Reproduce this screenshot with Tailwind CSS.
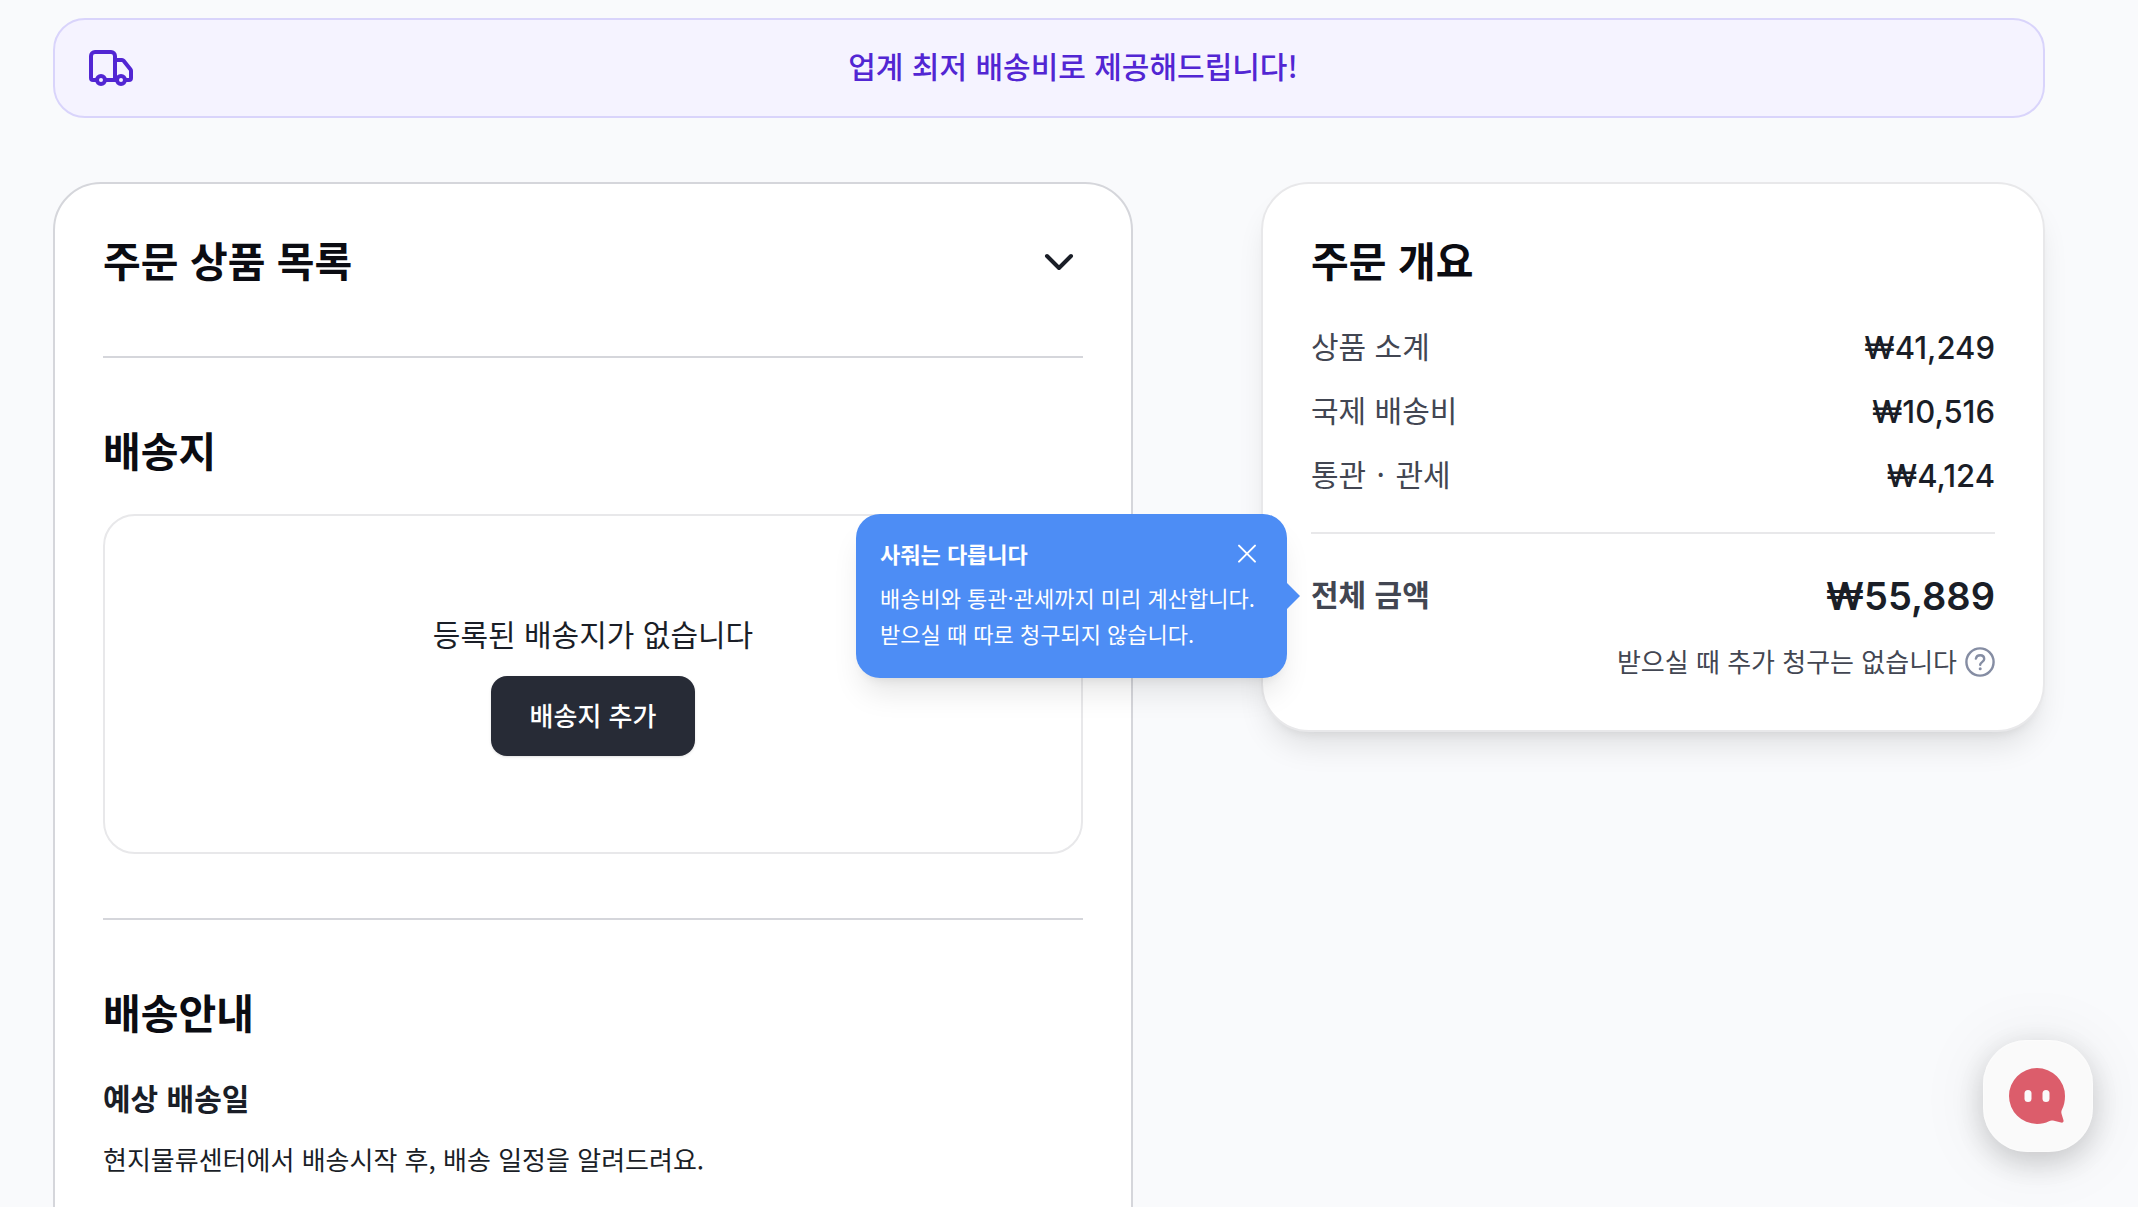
<!DOCTYPE html>
<html lang="ko">
<head>
<meta charset="utf-8">
<meta name="viewport" content="width=device-width, initial-scale=1">
<title>주문하기</title>
<script src="https://cdn.jsdelivr.net/npm/@tailwindcss/browser@4"></script>
</head>
<body class="min-h-screen bg-[#f9fafc] font-['Noto_Sans_CJK_KR',sans-serif] text-[#1a1e27]">
<main class="pt-[18px] pr-[93px] pb-16 pl-[53px]">

  <div class="flex items-center rounded-[32px] border-2 border-[#d9d4fb] bg-[#f5f3ff] px-8 py-6 text-[#5226d3]">
    <svg class="size-12 shrink-0" viewBox="0 0 24 24" fill="none" stroke="currentColor" stroke-width="2" stroke-linecap="round" stroke-linejoin="round" aria-hidden="true">
      <path d="M14 18V6a2 2 0 0 0-2-2H4a2 2 0 0 0-2 2v11a1 1 0 0 0 1 1h2"/>
      <path d="M15 18H9"/>
      <path d="M19 18h2a1 1 0 0 0 1-1v-3.65a1 1 0 0 0-.22-.624l-3.48-4.35A1 1 0 0 0 17.52 8H14"/>
      <circle cx="17" cy="18" r="2"/>
      <circle cx="7" cy="18" r="2"/>
    </svg>
    <p class="flex-1 pb-1.5 text-center text-[30px] leading-[42px] font-medium">업계 최저 배송비로 제공해드립니다!</p>
  </div>

  <div class="mt-16 grid grid-cols-[1080fr_784fr] items-start gap-32">
    <div class="rounded-[48px] border-2 border-[#d5d6db] bg-white px-12 pt-12 pb-24">
      <section>
        <div class="flex items-center justify-between">
          <h2 class="pb-1.5 text-[41px] leading-[54px] font-bold text-[#0b0c12]">주문 상품 목록</h2>
          <button type="button" aria-label="주문 상품 목록 펼치기">
            <svg class="size-12" viewBox="0 0 24 24" fill="none" stroke="currentColor" stroke-width="2" stroke-linecap="round" stroke-linejoin="round" aria-hidden="true"><path d="m6 9 6 6 6-6"/></svg>
          </button>
        </div>
      </section>
      <hr class="my-16 border-t-2 border-[#d5d6db]">
      <section>
        <h2 class="pb-1.5 text-[41px] leading-[54px] font-bold text-[#0b0c12]">배송지</h2>
        <div class="mt-8 flex min-h-[340px] flex-col items-center justify-center gap-4 rounded-[32px] border-2 border-[#e8e8ea]">
          <p class="pb-1.5 text-[30px] leading-[42px]">등록된 배송지가 없습니다</p>
          <button type="button" class="h-20 min-w-[204px] rounded-2xl bg-[#272b36] px-8 pb-0.5 text-[26px] leading-[38px] font-medium text-white shadow-sm">배송지 추가</button>
        </div>
      </section>
      <hr class="my-16 border-t-2 border-[#d5d6db]">
      <section>
        <h2 class="pb-1.5 text-[41px] leading-[54px] font-bold text-[#0b0c12]">배송안내</h2>
        <h3 class="mt-8 pb-1.5 text-[30px] leading-[42px] font-bold">예상 배송일</h3>
        <p class="mt-4 pb-0.5 text-[26px] leading-[38px]">현지물류센터에서 배송시작 후, 배송 일정을 알려드려요.</p>
      </section>
    </div>

    <aside class="rounded-[48px] border-2 border-[#e8e8ea] bg-white p-12 shadow-[0_20px_30px_-6px_rgba(0,0,0,0.1),0_8px_12px_-8px_rgba(0,0,0,0.1)]">
      <h2 class="pb-1.5 text-[41px] leading-[54px] font-bold text-[#0b0c12]">주문 개요</h2>
      <dl class="mt-8 flex flex-col gap-4">
        <div class="flex justify-between"><dt class="pb-1.5 text-[30px] leading-[42px] text-[#424652]">상품 소계</dt><dd class="font-[Inter,sans-serif] text-[31px] leading-[48px] font-medium">₩41,249</dd></div>
        <div class="flex justify-between"><dt class="pb-1.5 text-[30px] leading-[42px] text-[#424652]">국제 배송비</dt><dd class="font-[Inter,sans-serif] text-[31px] leading-[48px] font-medium">₩10,516</dd></div>
        <div class="flex justify-between"><dt class="pb-1.5 text-[30px] leading-[42px] text-[#424652]">통관 <span class="mx-0.5">·</span> 관세</dt><dd class="font-[Inter,sans-serif] text-[31px] leading-[48px] font-medium">₩4,124</dd></div>
      </dl>
      <hr class="my-8 border-t-2 border-[#e8e8ea]">
      <div class="relative flex items-center justify-between">
        <span class="pb-1.5 text-[30px] leading-[42px] font-bold text-[#424652]">전체 금액</span>
        <span class="font-[Inter,sans-serif] text-[38px] leading-[60px] font-semibold">₩55,889</span>

        <div role="tooltip" class="absolute top-1/2 right-full mr-6 min-w-[431px] -translate-y-1/2 rounded-3xl bg-[#4d8df5] px-6 pt-[21px] pb-[27px] text-[22px] leading-9 whitespace-nowrap text-white shadow-[0_20px_30px_-6px_rgba(0,0,0,0.1),0_8px_12px_-8px_rgba(0,0,0,0.1)]">
          <div class="flex items-center justify-between">
            <strong class="font-bold">사줘는 다릅니다</strong>
            <button type="button" aria-label="닫기">
              <svg class="size-8" viewBox="0 0 24 24" fill="none" stroke="currentColor" stroke-width="1.5" stroke-linecap="round" aria-hidden="true"><path d="M18 6.500 6 18.500M6 6.500l12 12"/></svg>
            </button>
          </div>
          <p class="mt-2">배송비와 통관·관세까지 미리 계산합니다.<br>받으실 때 따로 청구되지 않습니다.</p>
          <svg class="absolute top-1/2 left-full h-[26px] w-[13px] -translate-y-1/2" viewBox="0 0 13 26" fill="#4d8df5" aria-hidden="true"><path d="M0 0 13 13 0 26Z"/></svg>
        </div>
      </div>
      <div class="mt-4 flex items-center justify-end gap-2 text-[#424652]">
        <span class="pb-0.5 text-[26px] leading-[38px]">받으실 때 추가 청구는 없습니다</span>
        <button type="button" aria-label="추가 청구 안내" class="text-[#858da3]">
          <svg class="size-[30px]" viewBox="0 0 30 30" fill="none" stroke="currentColor" stroke-width="2.4" stroke-linecap="round" stroke-linejoin="round" aria-hidden="true">
            <circle cx="15" cy="15" r="13.600"/>
            <path d="M10.900 11.600C11.300 9.500 13 8.200 15.200 8.200c2.300 0 4 1.500 4 3.700 0 3-4 3.300-4 5.800"/>
            <circle cx="15.200" cy="21.800" r="1.500" fill="currentColor" stroke="none"/>
          </svg>
        </button>
      </div>
    </aside>
  </div>
</main>

<button type="button" aria-label="채팅 상담" class="fixed right-[45px] bottom-[55px] flex h-28 w-[110px] items-center justify-center rounded-[44px] bg-[#fafafa] pr-0.5 shadow-[0_10px_32px_rgba(0,0,0,0.18),0_4px_70px_rgba(0,0,0,0.08),inset_0_0_3px_#ffffff]">
  <svg class="size-14" viewBox="0 0 56 56" aria-hidden="true">
    <path fill="#dc5d6b" d="M28 0a28 28 0 1 0 0 56c4.500 0 8.500-1 12-2.800 1.300-.7 2.500-.9 4-.6l8 2c1.700.4 2.900-.6 2.500-2.300l-1.900-6.300c-.5-1.700-.3-3 .4-4.500C55 37.500 56 33 56 28A28 28 0 0 0 28 0Z"/>
    <rect x="15.500" y="22" width="7" height="12" rx="3.500" fill="#fafafa"/>
    <rect x="33.500" y="22" width="7" height="12" rx="3.500" fill="#fafafa"/>
  </svg>
</button>
</body>
</html>
